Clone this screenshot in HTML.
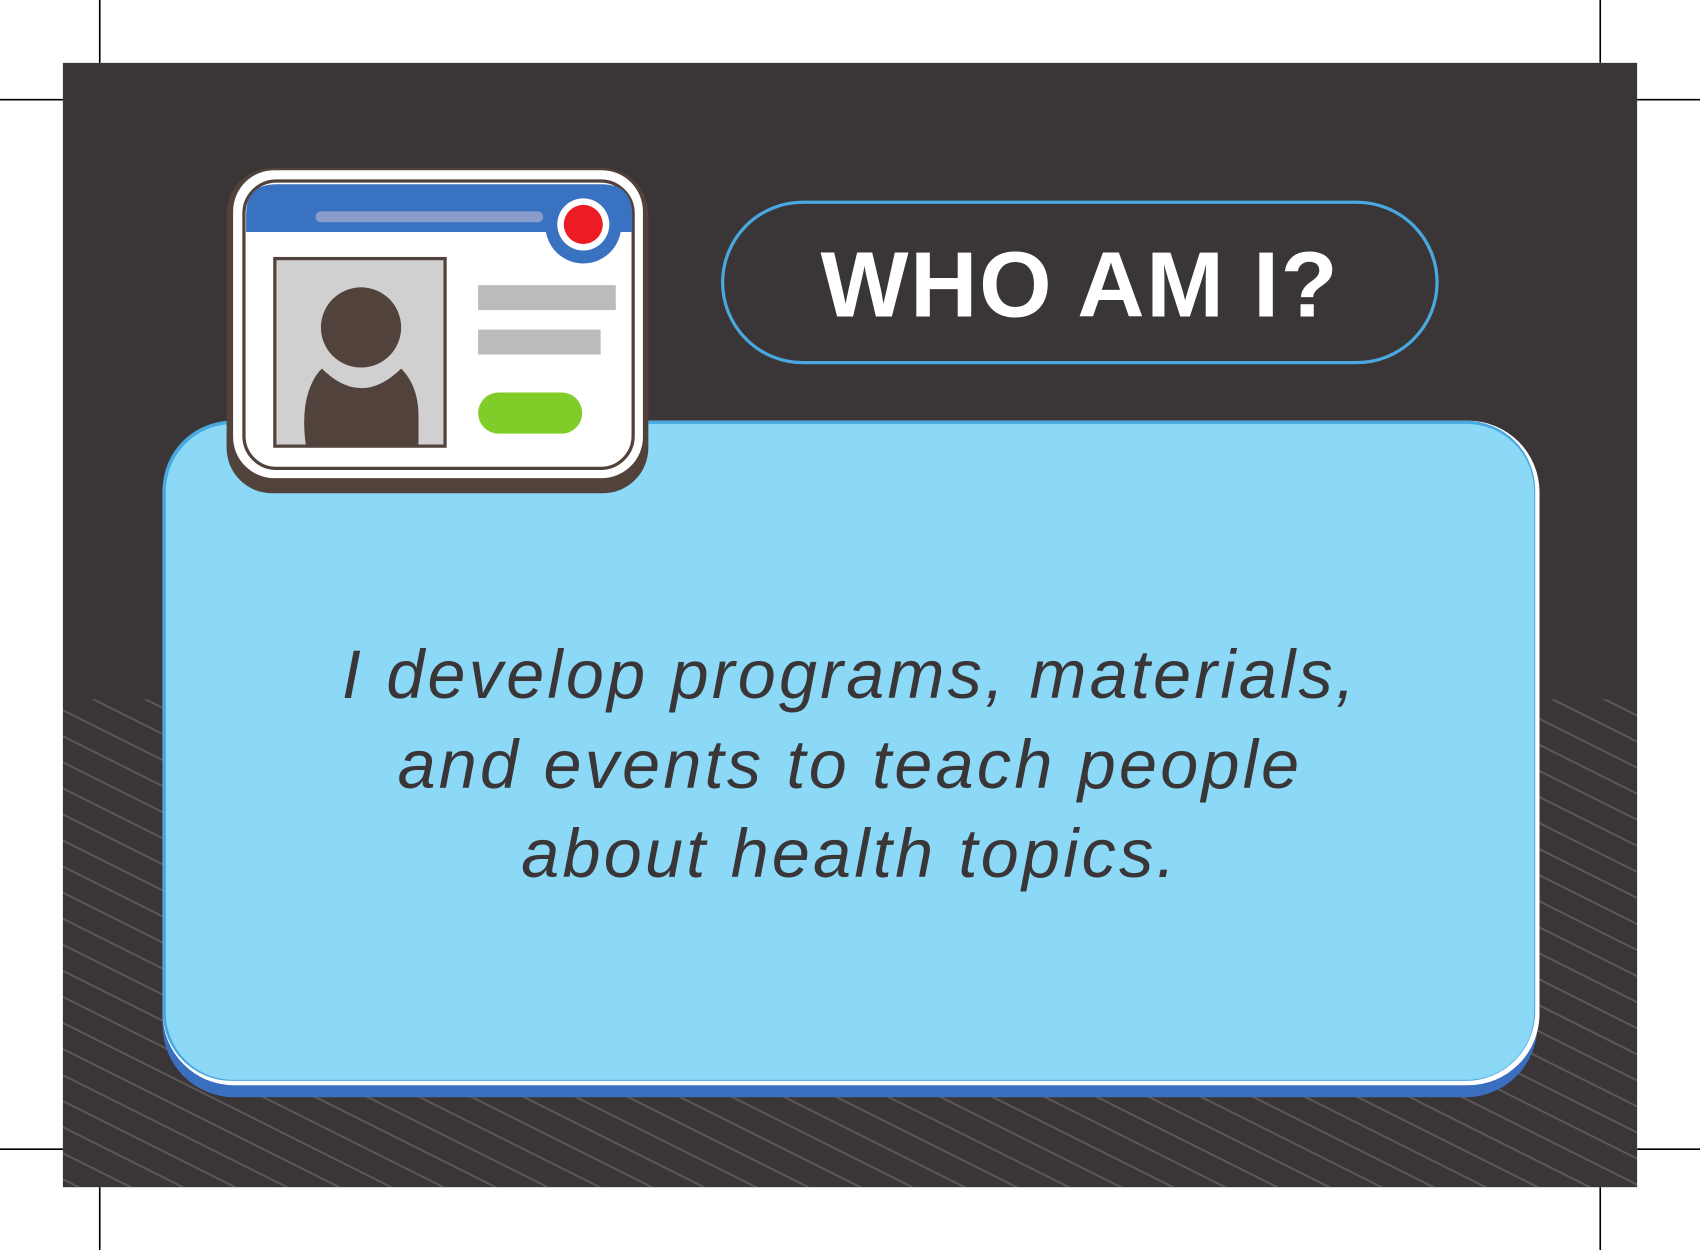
<!DOCTYPE html>
<html><head><meta charset="utf-8">
<style>
html,body{margin:0;padding:0;background:#fff;width:1700px;height:1250px;overflow:hidden}
#w{position:absolute;left:0;top:0;width:1568px;height:1153px;transform:scale(1.08418);transform-origin:0 0}
.t{position:absolute;left:150px;width:1268px;text-align:center;font-family:"Liberation Sans",sans-serif;font-style:italic;font-size:63px;color:#3a3536;letter-spacing:3px}
.who{position:absolute;left:665px;top:188px;width:662px;height:151px;text-align:center;line-height:151px;font-family:"Liberation Sans",sans-serif;font-weight:bold;font-size:86px;color:#fff;letter-spacing:1.5px}
</style></head><body>
<div id="w">
<svg width="1568" height="1153" viewBox="0 0 1568 1153" style="position:absolute;left:0;top:0">
<defs>
<pattern id="h" patternUnits="userSpaceOnUse" width="40" height="21.5" patternTransform="rotate(26.57)">
<rect x="0" y="0" width="40" height="1.8" fill="#5c5758"/>
</pattern>
<clipPath id="c"><polygon points="58,640 1510,640 1510,1095 58,1095"/></clipPath>
</defs>
<g stroke="#000" stroke-width="1.5">
<line x1="92" y1="0" x2="92" y2="58"/><line x1="1476" y1="0" x2="1476" y2="58"/>
<line x1="92" y1="1095" x2="92" y2="1153"/><line x1="1476" y1="1095" x2="1476" y2="1153"/>
<line x1="0" y1="92" x2="58" y2="92"/><line x1="1510" y1="92" x2="1568" y2="92"/>
<line x1="0" y1="1060" x2="58" y2="1060"/><line x1="1510" y1="1060" x2="1568" y2="1060"/>
</g>
<rect x="58" y="58" width="1452" height="1037" fill="#3a3536"/>
<rect x="58" y="645" width="1452" height="450" fill="url(#h)" clip-path="url(#c)"/>
<rect x="666.5" y="186.5" width="659" height="148" rx="74" fill="#3a3536" stroke="#4aa8e0" stroke-width="3"/>
<rect x="150" y="398" width="1268" height="614" rx="66" fill="#3a6fc0"/>
<rect x="150" y="388" width="1270" height="613" rx="66" fill="#fff"/>
<rect x="150" y="388" width="1266" height="609" rx="64" fill="#4aa8e0"/>
<rect x="153" y="391" width="1262" height="605" rx="62" fill="#8bd9f6"/>
<rect x="209" y="155" width="389" height="300" rx="42" fill="#52423c"/>
<rect x="215" y="157" width="378" height="284" rx="38" fill="#fff"/>
<rect x="225" y="167" width="359" height="265" rx="30" fill="#fff" stroke="#52423c" stroke-width="3"/>
<path d="M227,214 L227,198 Q227,170 255,170 L555,170 Q583,170 583,198 L583,214 Z" fill="#3a72c2"/>
<rect x="291" y="195" width="210" height="10" rx="5" fill="#8a9ccc"/>
<circle cx="538" cy="208" r="35" fill="#3a72c2"/>
<circle cx="538" cy="207" r="24" fill="#fff"/>
<circle cx="538" cy="207" r="18" fill="#ed1c24"/>
<rect x="253.5" y="238.5" width="157" height="173" fill="#d0d0d0" stroke="#52423c" stroke-width="3"/>
<circle cx="333" cy="302" r="37" fill="#52423c"/>
<path d="M297,340 Q333,376 370,340 Q386,356 386,384 L386,410 L282,410 Q278,380 285,360 Q290,346 297,340 Z" fill="#52423c"/>
<rect x="441" y="263" width="127" height="23" fill="#bbbbbb"/>
<rect x="441" y="304" width="113" height="23" fill="#bbbbbb"/>
<rect x="441" y="362" width="96" height="38" rx="19" fill="#80cc28"/>
</svg>
<div class="who">WHO AM I?</div>
<div class="t" style="top:587px">I develop programs, materials,</div>
<div class="t" style="top:670px">and events to teach people</div>
<div class="t" style="top:752px">about health topics.</div>
</div>
</body></html>
